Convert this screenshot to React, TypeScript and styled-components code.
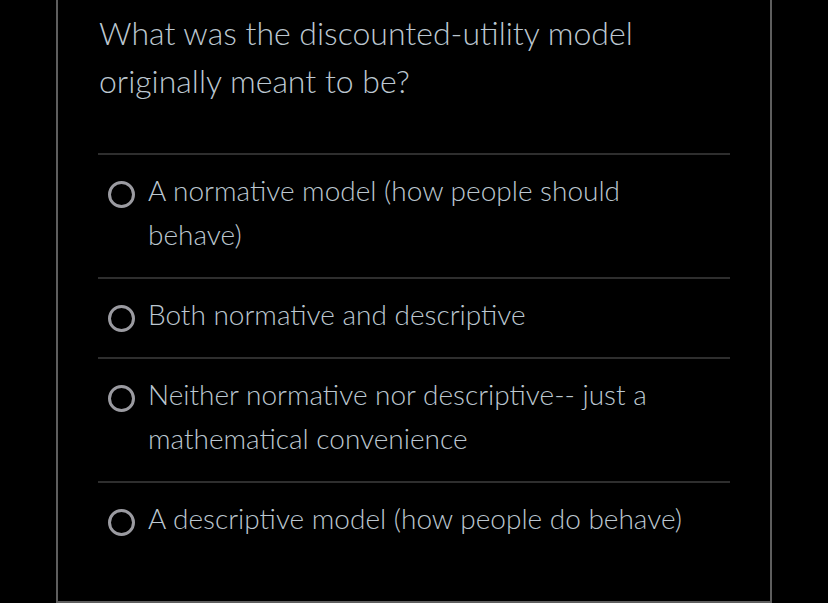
import styled, { createGlobalStyle } from "styled-components";

const GlobalStyle = createGlobalStyle`
  html, body {
    margin: 0;
    padding: 0;
    background: #000;
  }
  body {
    font-family: "Lato Light", "Lato", "Open Sans", "Liberation Sans", sans-serif;
  }
`;

const Page = styled.div`
  height: 100vh;
  overflow: hidden;
  display: flex;
  justify-content: center;
  align-items: flex-end;
`;

const Card = styled.div`
  width: 716px;
  box-sizing: border-box;
  border: 2px solid #5e5e5e;
  padding: 9px 40px 40px 40px;
`;

const Question = styled.h2`
  margin: 0 0 48px 1px;
  font-size: 32px;
  font-weight: 300;
  line-height: 48px;
  color: #bcc7d0;
`;

const Options = styled.div`
  display: flex;
  flex-direction: column;
`;

const Option = styled.label`
  display: flex;
  align-items: flex-start;
  border-top: 2px solid #2e2e2e;
  padding: 13px 20px 21px 10px;
  cursor: pointer;
`;

const Radio = styled.span`
  flex: none;
  width: 27px;
  height: 27px;
  box-sizing: border-box;
  border: 3px solid #9b9ba1;
  border-radius: 50%;
  margin-top: 13px;
  margin-right: 13px;
`;

const OptionText = styled.span`
  font-size: 28px;
  font-weight: 300;
  line-height: 44px;
  color: #bcc7d0;
`;

const answers = [
  "A normative model (how people should behave)",
  "Both normative and descriptive",
  "Neither normative nor descriptive-- just a mathematical convenience",
  "A descriptive model (how people do behave)",
];

const App = () => {
  return (
    <>
      <GlobalStyle />
      <Page>
        <Card>
          <Question>
            What was the discounted-utility model originally meant to be?
          </Question>
          <Options>
            {answers.map((a) => (
              <Option key={a}>
                <Radio />
                <OptionText>{a}</OptionText>
              </Option>
            ))}
          </Options>
        </Card>
      </Page>
    </>
  );
};

export default App;
